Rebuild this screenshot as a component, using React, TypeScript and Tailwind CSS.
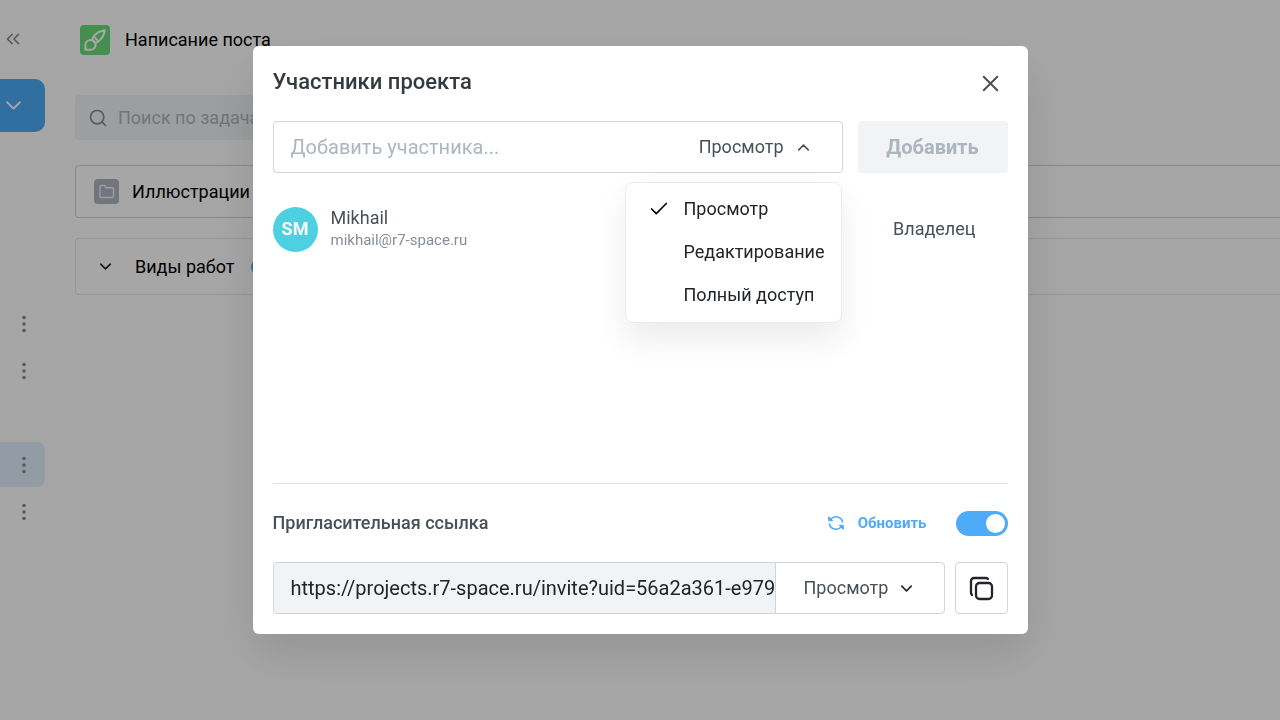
import React, { useState } from "react";
import { Check, ChevronDown, ChevronUp, ChevronsLeft, Search, X } from "lucide-react";

const ROLES = ["Просмотр", "Редактирование", "Полный доступ"];

const SIDEBAR_ROWS = [
  { id: 1, menu: true, active: false },
  { id: 2, menu: true, active: false },
  { id: 3, menu: false, active: false },
  { id: 4, menu: true, active: true },
  { id: 5, menu: true, active: false },
];

function BrushIcon() {
  return (
    <svg width="24" height="24" viewBox="0 0 24 24" fill="none" stroke="#fff" strokeWidth="2" strokeLinejoin="round">
      <path d="M21.800 2.200C17.500 2.800 12.800 5.200 10.200 9L9.200 11.600L12.600 14.800L15 13.800C18.800 11 21.200 7 21.800 2.200Z" />
      <path d="M9 12C5.500 11.500 2.400 13.600 2.400 17V21.700H7.500C11 21.700 13.200 18.800 12.600 15.200L9 12Z" />
      <path d="M10.800 8.600L15.400 13.200" />
    </svg>
  );
}

function FolderIcon() {
  return (
    <svg width="17" height="17" viewBox="0 0 17 17" fill="none" stroke="currentColor" strokeWidth="1.4" strokeLinejoin="round">
      <path d="M2 13.500V3.500A1 1 0 0 1 3 2.500H6.600L8.600 4.700H14.500A1 1 0 0 1 15.500 5.700V13.500A1 1 0 0 1 14.500 14.500H3A1 1 0 0 1 2 13.500Z" />
    </svg>
  );
}

function DotsIcon() {
  return (
    <svg width="6" height="20" viewBox="0 0 6 20" fill="#868e96">
      <circle cx="3" cy="3.500" r="1.800" />
      <circle cx="3" cy="10" r="1.800" />
      <circle cx="3" cy="16.500" r="1.800" />
    </svg>
  );
}

function RefreshIcon() {
  return (
    <svg width="18" height="18" viewBox="0 0 18 18" fill="none" stroke="currentColor" strokeWidth="1.6" strokeLinejoin="round">
      <path d="M3.800 5.300A6.700 6.700 0 0 1 15.700 8.600" />
      <path d="M14.200 12.700A6.700 6.700 0 0 1 2.300 9.400" />
      <path d="M1.700 2.700V6.700H5.700Z" fill="currentColor" strokeWidth="1" />
      <path d="M16.300 15.300V11.300H12.300Z" fill="currentColor" strokeWidth="1" />
    </svg>
  );
}

function CopyIcon() {
  return (
    <svg width="26" height="26" viewBox="0 0 26 26" fill="none" stroke="#212529" strokeWidth="2.300" strokeLinecap="round">
      <rect x="8" y="8" width="16" height="16" rx="3.500" />
      <path d="M4 20A3 3 0 0 1 3 17.500V6A3 3 0 0 1 6 3H17.500A3 3 0 0 1 20 4" />
    </svg>
  );
}

function Sidebar() {
  return (
    <aside className="w-[45px] shrink-0">
      <button aria-label="Свернуть" className="mt-[27px] flex h-6 items-center pl-0.5 text-[#868e96]">
        <ChevronsLeft size={22} strokeWidth={1.8} />
      </button>
      <button aria-label="Создать" className="mt-7 flex h-[53px] w-full items-center rounded-r-[10px] bg-[#4dabf7] pl-px text-white">
        <ChevronDown size={25} strokeWidth={2} />
      </button>
      <ul className="mt-[169px] flex flex-col gap-0.5">
        {SIDEBAR_ROWS.map((row) => (
          <li
            key={row.id}
            className={`flex h-[45px] items-center justify-end rounded-r-lg pr-[18px] ${row.active ? "bg-[#e2f0fc]" : ""}`}
          >
            {row.menu && (
              <button aria-label="Меню проекта">
                <DotsIcon />
              </button>
            )}
          </li>
        ))}
      </ul>
    </aside>
  );
}

function ProjectPage() {
  return (
    <main className="min-w-0 flex-1 pl-[30px]">
      <header className="flex h-20 items-center gap-[15px] pl-[5px]">
        <span className="flex h-[30px] w-[30px] items-center justify-center rounded bg-[#69db7c]">
          <BrushIcon />
        </span>
        <h1 className="text-lg text-black">Написание поста</h1>
      </header>

      <label className="mt-[15px] flex h-[45px] w-[400px] items-center gap-2.5 rounded bg-[#f1f3f5] pl-[13px] text-[#868e96]">
        <Search size={20} strokeWidth={2} />
        <input
          type="search"
          aria-label="Поиск по задачам"
          placeholder="Поиск по задачам"
          className="min-w-0 flex-1 bg-transparent text-lg outline-none placeholder:text-[#adb5bd]"
        />
      </label>

      <div className="mt-[25px] flex h-[53px] items-center gap-[13px] rounded-l border border-r-0 border-[#ced4da] pl-[18px]">
        <span className="flex h-[25px] w-[25px] items-center justify-center rounded bg-[#adb5bd] text-[#f1f3f5]">
          <FolderIcon />
        </span>
        <span className="text-lg text-black">Иллюстрации</span>
      </div>

      <div className="mt-5 flex h-[57px] items-center rounded-l border border-r-0 border-[#e3e6e9] pl-5">
        <ChevronDown size={19} strokeWidth={2} className="text-[#212529]" />
        <span className="ml-5 text-lg text-black">Виды работ</span>
        <span className="ml-4 h-4 w-4 rounded-full bg-[#4dabf7]"></span>
      </div>
    </main>
  );
}

function RoleMenu({ role, onSelect }: { role: string; onSelect: (role: string) => void }) {
  return (
    <ul
      role="listbox"
      aria-label="Права доступа"
      className="absolute top-[60px] right-0 z-10 w-[217px] rounded-lg border border-[#e9ecef] bg-white pt-1 pb-1.5 shadow-[0_16px_32px_rgba(0,0,0,0.08)]"
    >
      {ROLES.map((item) => (
        <li key={item} role="option" aria-selected={item === role}>
          <button onClick={() => onSelect(item)} className="flex h-[43px] w-full items-center pl-[22px] text-lg text-[#212529]">
            <span className="w-9 text-black">{item === role && <Check size={22} strokeWidth={1.8} />}</span>
            {item}
          </button>
        </li>
      ))}
    </ul>
  );
}

function MembersDialog() {
  const [role, setRole] = useState("Просмотр");
  const [open, setOpen] = useState(true);
  const [linkEnabled, setLinkEnabled] = useState(true);

  return (
    <div
      role="dialog"
      aria-modal="true"
      aria-labelledby="members-title"
      className="w-[775px] max-w-full rounded-md bg-white p-5 text-[#495057] shadow-[0_20px_50px_rgba(0,0,0,0.12)]"
    >
      <div className="flex h-[35px] items-start justify-between">
        <h2 id="members-title" className="text-[22px] leading-8 font-medium text-[#343a40]">
          Участники проекта
        </h2>
        <button aria-label="Закрыть" className="pt-1 pr-1 text-[#495057]">
          <X size={27} strokeWidth={1.8} />
        </button>
      </div>

      {/* Invite form */}
      <div className="mt-5 flex gap-[15px]">
        <div className="relative flex h-[52px] min-w-0 flex-1 items-center rounded border border-[#ced4da]">
          <input
            aria-label="Добавить участника"
            placeholder="Добавить участника..."
            className="h-full min-w-0 flex-1 bg-transparent pl-[17px] text-xl outline-none placeholder:text-[#adb5bd]"
          />
          <button
            aria-haspopup="listbox"
            aria-expanded={open}
            onClick={() => setOpen(!open)}
            className="mr-[29px] flex items-center gap-2.5 text-lg"
          >
            {role}
            <ChevronUp size={19} strokeWidth={2} />
          </button>
          {open && (
            <RoleMenu
              role={role}
              onSelect={(item) => {
                setRole(item);
                setOpen(false);
              }}
            />
          )}
        </div>
        <button disabled className="h-[52px] w-[150px] rounded bg-[#f1f3f5] text-xl font-bold text-[#adb5bd]">
          Добавить
        </button>
      </div>

      {/* Members list */}
      <div className="mt-[33px] h-[277px]">
        <div className="flex items-center">
          <span className="flex h-[45px] w-[45px] items-center justify-center rounded-full bg-[#4dd0e1] text-lg font-bold text-white">
            SM
          </span>
          <div className="ml-[13px] flex-1 pb-0.5">
            <p className="text-lg leading-6">Mikhail</p>
            <p className="text-[15px] leading-5 text-[#868e96]">mikhail@r7-space.ru</p>
          </div>
          <span className="pr-8 text-lg">Владелец</span>
        </div>
      </div>

      {/* Invitation link */}
      <div className="flex h-[79px] items-center border-t border-[#dee2e6]">
        <h3 className="flex-1 text-lg font-medium">Пригласительная ссылка</h3>
        <button className="flex items-center gap-[13px] text-[15px] font-bold text-[#4dabf7]">
          <RefreshIcon />
          Обновить
        </button>
        <input
          type="checkbox"
          role="switch"
          aria-label="Пригласительная ссылка"
          checked={linkEnabled}
          onChange={(e) => setLinkEnabled(e.target.checked)}
          className="ml-[29px] h-[25px] w-[52px] appearance-none rounded-full bg-[#ced4da] p-[3px] before:block before:h-[19px] before:w-[19px] before:rounded-full before:bg-white checked:bg-[#4dabf7] checked:before:ml-auto"
        />
      </div>
      <div className="flex gap-2.5">
        <div className="flex h-[52px] min-w-0 flex-1 rounded border border-[#ced4da]">
          <input
            readOnly
            aria-label="Ссылка"
            value="https://projects.r7-space.ru/invite?uid=56a2a361-e979-4c1b"
            className="min-w-0 flex-1 rounded-l bg-[#f1f3f5] pl-[17px] text-xl text-[#212529] outline-none"
          />
          <div className="relative w-[169px] border-l border-[#ced4da]">
            <select aria-label="Права по ссылке" className="h-full w-full appearance-none bg-transparent pl-7 text-lg outline-none">
              {ROLES.map((item) => (
                <option key={item}>{item}</option>
              ))}
            </select>
            <ChevronDown size={19} className="pointer-events-none absolute top-4 right-7 text-[#212529]" />
          </div>
        </div>
        <button aria-label="Скопировать" className="flex h-[52px] w-[53px] items-center justify-center rounded border border-[#ced4da]">
          <CopyIcon />
        </button>
      </div>
    </div>
  );
}

export default function App() {
  return (
    <div className="min-h-screen bg-white font-['Roboto',sans-serif]">
      <div className="flex">
        <Sidebar />
        <ProjectPage />
      </div>
      <div className="fixed inset-0 flex items-start justify-center overflow-auto bg-black/35 pt-[46px]">
        <MembersDialog />
      </div>
    </div>
  );
}
